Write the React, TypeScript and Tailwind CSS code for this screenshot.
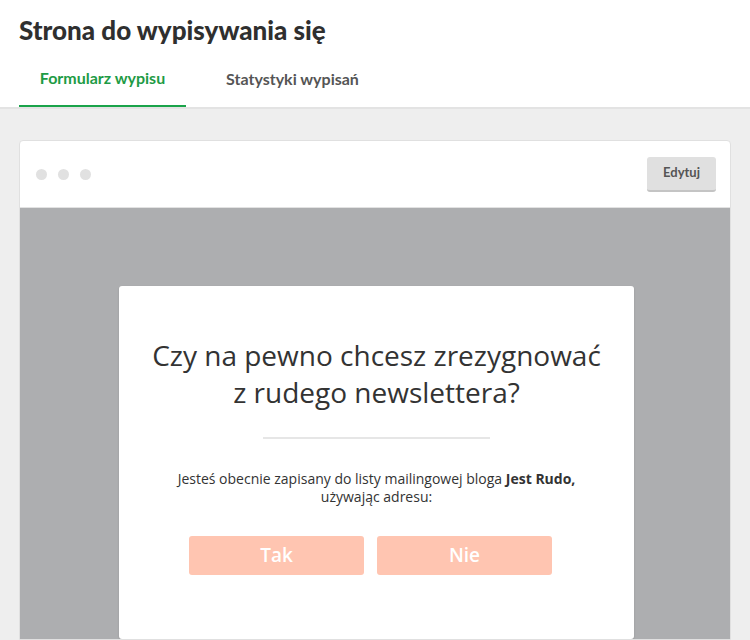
import React from "react";

const heading = { fontFamily: "Lato, 'Open Sans', sans-serif" };
const body = { fontFamily: "'Open Sans', 'Noto Sans', sans-serif" };

function Tabs() {
  return (
    <div className="flex px-[19px] border-b-2 border-[#e3e3e3]" style={heading}>
      <div className="w-[167px] h-[57px] flex items-center justify-center text-[16px] font-bold text-[#1e9b45] border-b-2 border-[#1aa34a] -mb-[2px]">
        Formularz wypisu
      </div>
      <div className="w-[213px] h-[57px] flex items-center justify-center text-[16px] font-bold text-[#555555]">
        Statystyki wypisań
      </div>
    </div>
  );
}

function WindowBar() {
  return (
    <div className="h-[67px] flex items-center justify-between pl-[16px] pr-[14px] border-b border-[#e2e2e2]">
      <div className="flex gap-[11px]">
        <span className="w-[11px] h-[11px] rounded-full bg-[#e1e1e1]" />
        <span className="w-[11px] h-[11px] rounded-full bg-[#e1e1e1]" />
        <span className="w-[11px] h-[11px] rounded-full bg-[#e1e1e1]" />
      </div>
      <button
        className="w-[69px] h-[35px] rounded-[3px] bg-[#e0e0e0] border-b-2 border-[#c4c4c4] text-[13px] font-bold text-[#555555]"
        style={heading}
      >
        Edytuj
      </button>
    </div>
  );
}

function Dialog() {
  return (
    <div className="w-[515px] ml-[3px] bg-white rounded-[3px] shadow-[0_1px_2px_rgba(0,0,0,0.15)] flex flex-col items-center pt-[51px] pb-[50px]" style={body}>
      <h2 className="text-[28px] leading-[37px] text-[#333333] text-center font-normal">
        Czy na pewno chcesz zrezygnować
        <br />z rudego newslettera?
      </h2>
      <div className="w-[227px] h-[2px] bg-[#e6e6e6] mt-[26px]" />
      <p className="mt-[31px] text-[14px] leading-[18px] text-[#333333] text-center">
        Jesteś obecnie zapisany do listy mailingowej bloga <b>Jest Rudo,</b>
        <br />używając adresu:
      </p>
      <div className="flex gap-[13px] mt-[30px] mr-[12px]">
        <button className="w-[175px] h-[39px] rounded-[3px] bg-[#ffc5b1] text-white text-[19px] font-semibold">
          Tak
        </button>
        <button className="w-[175px] h-[39px] rounded-[3px] bg-[#ffc5b1] text-white text-[19px] font-semibold">
          Nie
        </button>
      </div>
    </div>
  );
}

export default function App() {
  return (
    <div className="w-[750px] h-[640px] overflow-hidden bg-[#eeeeee] flex flex-col">
      <div className="bg-white">
        <h1 className="px-[19px] pt-[13px] h-[50px] text-[26px] font-black text-[#2f2f2f] leading-[34px]" style={heading}>
          Strona do wypisywania się
        </h1>
        <Tabs />
      </div>
      <div className="px-[19px] pt-[31px] flex-1 flex flex-col">
        <div className="flex-1 flex flex-col bg-white border border-[#e0e0e0] rounded-t-[4px] overflow-hidden">
          <WindowBar />
          <div className="flex-1 bg-[#adaeb0] flex justify-center pt-[78px]">
            <Dialog />
          </div>
        </div>
      </div>
    </div>
  );
}
